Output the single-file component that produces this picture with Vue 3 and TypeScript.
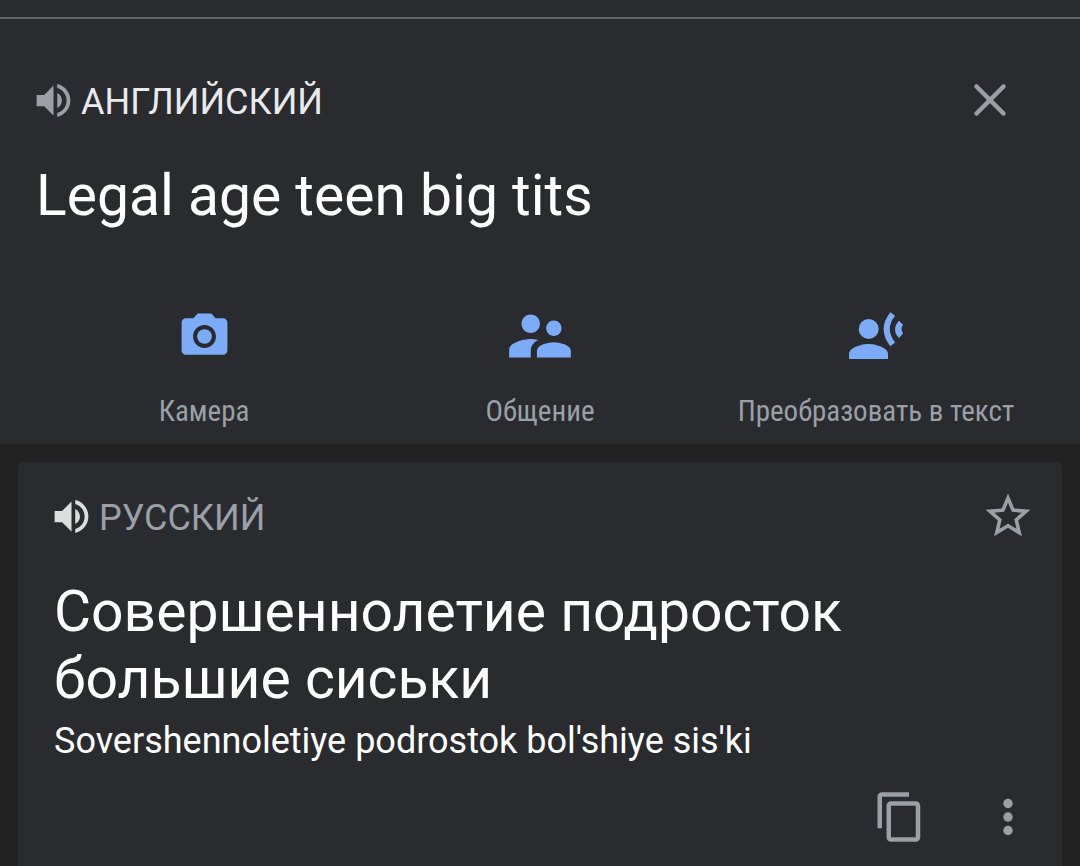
<script setup lang="ts">
type IconName = 'camera' | 'people' | 'transcribe'

interface Action {
  icon: IconName
  label: string
}

const source = {
  language: 'АНГЛИЙСКИЙ',
  text: 'Legal age teen big tits',
}

const result = {
  language: 'РУССКИЙ',
  text: 'Совершеннолетие подросток большие сиськи',
  transliteration: "Sovershennoletiye podrostok bol'shiye sis'ki",
}

const actions: Action[] = [
  { icon: 'camera', label: 'Камера' },
  { icon: 'people', label: 'Общение' },
  { icon: 'transcribe', label: 'Преобразовать в текст' },
]

const volumePath =
  'M3 9v6h4l5 5V4L7 9H3zm13.5 3c0-1.77-1.02-3.29-2.5-4.03v8.05c1.48-.73 2.5-2.25 2.5-4.02zM14 3.23v2.06c2.89.86 5 3.54 5 6.71s-2.11 5.85-5 6.71v2.06c4.01-.91 7-4.49 7-8.77s-2.99-7.86-7-8.77z'
</script>

<template>
  <main class="translator">
    <section class="source">
      <div class="head source-head">
        <button class="language" type="button">
          <svg class="volume" viewBox="0 0 24 24" aria-hidden="true"><path :d="volumePath" /></svg>
          <span class="language-name">{{ source.language }}</span>
        </button>
        <button class="icon-button" type="button" aria-label="Закрыть">
          <svg class="icon" viewBox="0 0 24 24" aria-hidden="true">
            <path class="cross" d="M6 6l12 12M18 6L6 18" />
          </svg>
        </button>
      </div>
      <p class="phrase">{{ source.text }}</p>
      <nav class="actions">
        <button v-for="action in actions" :key="action.icon" class="action" type="button">
          <span class="action-icon">
            <svg v-if="action.icon === 'camera'" class="camera" viewBox="0 0 24 24" aria-hidden="true">
              <circle cx="12" cy="12" r="3.2" />
              <path d="M9 2L7.17 4H4c-1.1 0-2 .9-2 2v12c0 1.1.9 2 2 2h16c1.1 0 2-.9 2-2V6c0-1.1-.9-2-2-2h-3.17L15 2H9zm3 15c-2.76 0-5-2.24-5-5s2.24-5 5-5 5 2.24 5 5-2.24 5-5 5z" />
            </svg>
            <svg v-else-if="action.icon === 'people'" class="people" viewBox="0 0 24 24" aria-hidden="true">
              <path d="M16.5 12c1.38 0 2.49-1.12 2.49-2.5S17.88 7 16.5 7 14 8.12 14 9.5s1.12 2.5 2.5 2.5zM9 11c1.66 0 2.99-1.34 2.99-3S10.66 5 9 5 6 6.34 6 8s1.34 3 3 3zm7.5 3c-1.83 0-5.5.92-5.5 2.75V19h11v-2.25c0-1.83-3.67-2.75-5.5-2.75zM9 13c-2.33 0-7 1.17-7 3.5V19h7v-2.25c0-.85.33-2.34 2.37-3.47C10.5 13.1 9.66 13 9 13z" />
            </svg>
            <svg v-else class="transcribe" viewBox="0 0 60 60" aria-hidden="true">
              <circle cx="22.7" cy="23" r="10" />
              <path d="M3 53v-5c0-6.7 13-10 19.5-10S42 41.3 42 48v5z" />
              <path class="wave" d="M46.7 8Q34.7 23 46.7 38.3" />
              <path d="M53 14.7L57 18.7Q54 23 57 27.5L53 32Q45 23.3 53 14.7z" />
            </svg>
          </span>
          <span class="action-label">{{ action.label }}</span>
        </button>
      </nav>
    </section>

    <section class="card">
      <div class="head card-head">
        <button class="language result-language" type="button">
          <svg class="volume" viewBox="0 0 24 24" aria-hidden="true"><path :d="volumePath" /></svg>
          <span class="language-name">{{ result.language }}</span>
        </button>
        <button class="icon-button" type="button" aria-label="В избранное">
          <svg class="icon" viewBox="0 0 24 24" aria-hidden="true">
            <path d="M22 9.24l-7.19-.62L12 2 9.19 8.63 2 9.24l5.46 4.73L5.82 21 12 17.27 18.18 21l-1.63-7.03L22 9.24zM12 15.4l-3.76 2.27 1-4.28-3.32-2.88 4.38-.38L12 6.1l1.71 4.04 4.38.38-3.32 2.88 1 4.28L12 15.4z" />
          </svg>
        </button>
      </div>
      <p class="phrase">{{ result.text }}</p>
      <p class="transliteration">{{ result.transliteration }}</p>
      <div class="tools">
        <button class="icon-button" type="button" aria-label="Копировать">
          <svg class="icon" viewBox="0 0 24 24" aria-hidden="true">
            <path d="M16 1H4c-1.1 0-2 .9-2 2v14h2V3h12V1zm3 4H8c-1.1 0-2 .9-2 2v14c0 1.1.9 2 2 2h11c1.1 0 2-.9 2-2V7c0-1.1-.9-2-2-2zm0 16H8V7h11v14z" />
          </svg>
        </button>
        <button class="icon-button" type="button" aria-label="Ещё">
          <svg class="icon" viewBox="0 0 24 24" aria-hidden="true">
            <circle cx="12" cy="6" r="2.1" />
            <circle cx="12" cy="12" r="2.1" />
            <circle cx="12" cy="18" r="2.1" />
          </svg>
        </button>
      </div>
    </section>
  </main>
</template>

<style>
body {
  margin: 0;
  background: #212221;
}
</style>

<style scoped>
.translator {
  box-sizing: border-box;
  display: flex;
  flex-direction: column;
  min-height: 100vh;
  padding-top: 17px;
  background: linear-gradient(#292b2e 17px, #212221 17px);
  color: #fff;
  font-family: Roboto, "Noto Sans", sans-serif;
}

button {
  margin: 0;
  padding: 0;
  border: 0;
  background: none;
  color: inherit;
  font: inherit;
  cursor: pointer;
}

svg {
  display: block;
  fill: currentColor;
}

.source {
  padding: 54px 36px 17px;
  border-top: 2px solid #646566;
  background: #292b2e;
}

.head {
  display: flex;
  align-items: center;
  justify-content: space-between;
  margin-left: -5px;
}

.source-head {
  margin-right: 27px;
}

.language {
  display: flex;
  align-items: center;
  gap: 5px;
  color: #e8eaed;
  font-size: 36px;
  line-height: 42px;
}

.language-name {
  padding-top: 3px;
}

.volume {
  width: 45px;
  height: 45px;
  color: #9aa0a6;
}

.result-language {
  color: #9aa0a6;
}

.result-language .volume {
  color: #dcdedd;
}

.icon-button {
  color: #9aa0a6;
}

.icon {
  width: 54px;
  height: 54px;
}

.cross {
  fill: none;
  stroke: currentColor;
  stroke-width: 2;
  stroke-linecap: round;
}

.phrase {
  margin: 35px 0 0;
  font-size: 57px;
  line-height: 67px;
}

.actions {
  display: grid;
  grid-template-columns: repeat(3, 1fr);
  margin-top: 70px;
}

.action {
  display: flex;
  flex-direction: column;
  align-items: center;
  gap: 22px;
}

.action-icon {
  display: flex;
  align-items: center;
  height: 74px;
  color: #7cacf8;
}

.camera {
  width: 55px;
  height: 55px;
}

.people {
  width: 74px;
  height: 74px;
}

.transcribe {
  width: 60px;
  height: 60px;
}

.wave {
  fill: none;
  stroke: currentColor;
  stroke-width: 6;
}

.action-label {
  color: #9aa0a6;
  font-family: "Roboto Condensed", Roboto, "Noto Sans", sans-serif;
  font-size: 29px;
  line-height: 32px;
  white-space: nowrap;
}

.card {
  flex: 1;
  margin: 18px 18px 0;
  padding: 27px 36px 22px;
  border-radius: 6px 6px 0 0;
  background: #292b2e;
}

.card-head {
  margin-right: -9px;
}

.transliteration {
  margin: 8px 0 0;
  font-size: 36px;
  line-height: 42px;
}

.tools {
  display: flex;
  justify-content: flex-end;
  gap: 54px;
  margin: 28px -9px 0 0;
}
</style>
